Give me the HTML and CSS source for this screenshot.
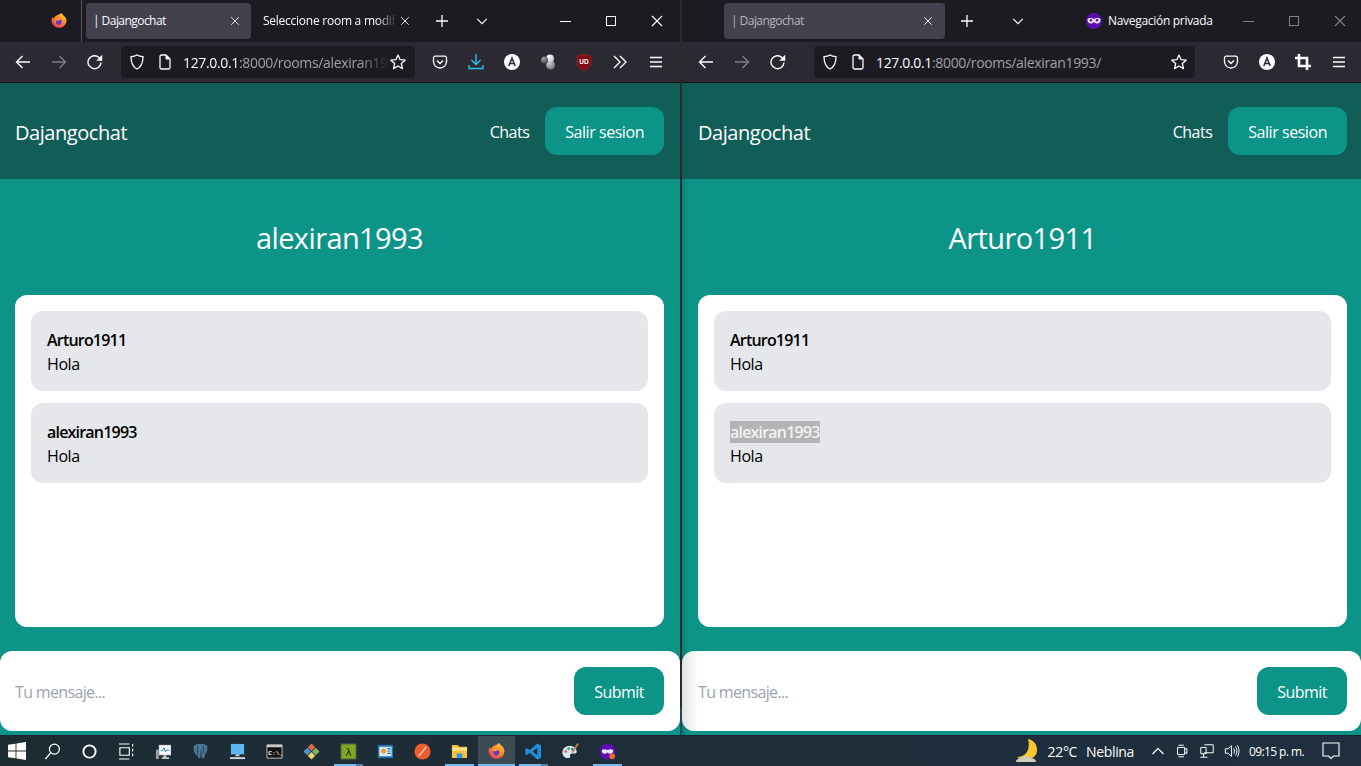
FILE: index.html
```html
<!DOCTYPE html>
<html lang="es">
<head>
<meta charset="utf-8">
<title>Dajangochat</title>
<link rel="stylesheet" href="styles.css">
</head>
<body>
<svg class="sprite" aria-hidden="true">
  <defs>
    <linearGradient id="ffg" x1="0.85" y1="0" x2="0.15" y2="1"><stop offset="0" stop-color="#ffd23a"/><stop offset="0.45" stop-color="#ff8a1e"/><stop offset="1" stop-color="#ee2a6a"/></linearGradient>
    <radialGradient id="ball-a" cx="0.35" cy="0.3" r="0.8"><stop offset="0" stop-color="#a8a8a8"/><stop offset="1" stop-color="#3d3d3d"/></radialGradient>
    <radialGradient id="ball-b" cx="0.35" cy="0.3" r="0.8"><stop offset="0" stop-color="#ffffff"/><stop offset="1" stop-color="#bdbdbd"/></radialGradient>
    <radialGradient id="ball-c" cx="0.4" cy="0.3" r="0.8"><stop offset="0" stop-color="#d0d0d0"/><stop offset="1" stop-color="#666"/></radialGradient>
    <symbol id="i-firefox" viewBox="0 0 16 16"><path d="M8.500 1.300C9.300.6 10.200.3 10.800 0c.1 1 .6 1.400 1.300 1.700.2 0 .4.300 0 .5 2.300 1.500 3.400 3.500 3.400 5.800A7.500 7.500 0 1 1 .6 6.300c.2-1 .7-1.800 1.200-2.300.1.800.4 1.200.9 1.500C3.400 3.500 5.800 2.200 8.500 1.300z" fill="url(#ffg)"/><circle cx="7.800" cy="8.600" r="3.700" fill="#ff9a24"/><circle cx="7.800" cy="9" r="2.900" fill="#6b35c9"/><path d="M4.700 7.400c1.200-1.500 4-1.700 5.500-.3-1.200-.4-2.200 0-2.800.7-.8-.5-1.800-.6-2.700-.4z" fill="#ffc13a"/></symbol>
    <symbol id="i-x" viewBox="0 0 16 16"><path d="M3 3l10 10M13 3L3 13" fill="none" stroke="currentColor" stroke-width="1.200"/></symbol>
    <symbol id="i-plus" viewBox="0 0 16 16"><path d="M8 2v12M2 8h12" fill="none" stroke="currentColor" stroke-width="1.300"/></symbol>
    <symbol id="i-chev" viewBox="0 0 16 16"><path d="M2.500 5.500L8 11l5.500-5.500" fill="none" stroke="currentColor" stroke-width="1.300"/></symbol>
    <symbol id="i-back" viewBox="0 0 16 16"><path d="M15 8H1.500M7.500 2L1.500 8l6 6" fill="none" stroke="currentColor" stroke-width="1.400"/></symbol>
    <symbol id="i-fwd" viewBox="0 0 16 16"><path d="M1 8h13.500M8.500 2l6 6-6 6" fill="none" stroke="currentColor" stroke-width="1.400"/></symbol>
    <symbol id="i-reload" viewBox="0 0 16 16"><path d="M14 8.500a6.500 6.500 0 1 1-2-5L14.500 6" fill="none" stroke="currentColor" stroke-width="1.400"/><path d="M15.200.8v6h-6z" fill="currentColor"/></symbol>
    <symbol id="i-shield" viewBox="0 0 16 16"><path d="M8 1c1.800 1.100 3.800 1.500 6 1.700 0 5.800-1.500 10-6 12.300C3.500 12.700 2 8.500 2 2.700 4.200 2.500 6.200 2.100 8 1z" fill="none" stroke="currentColor" stroke-width="1.300"/></symbol>
    <symbol id="i-page" viewBox="0 0 16 16"><path d="M3 2.500A1.500 1.500 0 0 1 4.500 1H9l4 4v8.500a1.500 1.500 0 0 1-1.500 1.500h-7A1.500 1.500 0 0 1 3 13.500z" fill="none" stroke="currentColor" stroke-width="1.300"/><path d="M9 1v4h4" fill="currentColor" stroke="currentColor" stroke-width="1"/></symbol>
    <symbol id="i-star" viewBox="0 0 16 16"><path d="M8 1l2.100 4.700 5.100.5-3.900 3.300 1.200 5.100L8 12l-4.500 2.600 1.200-5.100L.8 6.200l5.100-.5z" fill="none" stroke="currentColor" stroke-width="1.300" stroke-linejoin="round"/></symbol>
    <symbol id="i-pocket" viewBox="0 0 16 16"><path d="M1.500 4A1.800 1.800 0 0 1 3.300 2.200h9.400A1.800 1.800 0 0 1 14.500 4v3.500a6.500 6.500 0 0 1-13 0z" fill="none" stroke="currentColor" stroke-width="1.300"/><path d="M5 6.500L8 9.500l3-3" fill="none" stroke="currentColor" stroke-width="1.400"/></symbol>
    <symbol id="i-acct" viewBox="0 0 16 16"><circle cx="8" cy="8" r="8" fill="#fbfbfe"/><path d="M4.800 12L8 4l3.200 8M6 9.500h4" fill="none" stroke="#2b2a33" stroke-width="1.500"/></symbol>
    <symbol id="i-menu" viewBox="0 0 16 16"><path d="M2 3.500h12M2 8h12M2 12.500h12" fill="none" stroke="currentColor" stroke-width="1.400"/></symbol>
  </defs>
</svg>

<div class="windows">
  <section class="window win-left">
    <div class="tabbar">
      <svg class="ff-logo"><use href="#i-firefox"/></svg>
      <span class="tab-sep"></span>
      <div class="tab tab-a"><span class="tab-title tight">| Dajangochat</span><svg class="ico-s"><use href="#i-x"/></svg></div>
      <div class="tab tab-b"><span class="tab-title fade">Seleccione room a modificar</span><svg class="ico-s"><use href="#i-x"/></svg></div>
      <svg class="ico-m plus-l"><use href="#i-plus"/></svg>
      <svg class="ico-c chev-l"><use href="#i-chev"/></svg>
      <div class="wctl">
        <span class="wbtn"><span class="w-min"></span></span>
        <span class="wbtn"><span class="w-max"></span></span>
        <span class="wbtn"><svg class="ico-m"><use href="#i-x"/></svg></span>
      </div>
    </div>
    <div class="toolbar">
      <span class="tbtn"><svg class="ico-m"><use href="#i-back"/></svg></span>
      <span class="tbtn dim"><svg class="ico-m"><use href="#i-fwd"/></svg></span>
      <span class="tbtn"><svg class="ico-m"><use href="#i-reload"/></svg></span>
      <div class="urlbar ub-left">
        <svg class="ico-m ub-shield"><use href="#i-shield"/></svg>
        <svg class="ico-m ub-page"><use href="#i-page"/></svg>
        <span class="url fade"><b>127.0.0.1</b>:8000/rooms/alexiran1993/</span>
        <svg class="ico-m ub-star"><use href="#i-star"/></svg>
      </div>
      <span class="tbtn"><svg class="ico-m"><use href="#i-pocket"/></svg></span>
      <span class="tbtn dl"><svg class="ico-m" viewBox="0 0 16 16"><path d="M8 0v10M3.500 6L8 10.500 12.500 6M1 11v3.500h14V11" fill="none" stroke="currentColor" stroke-width="1.400"/></svg></span>
      <span class="tbtn"><svg class="ico-m"><use href="#i-acct"/></svg></span>
      <span class="tbtn"><svg class="ico-l" viewBox="0 0 18 18"><circle cx="11.500" cy="12" r="4.500" fill="url(#ball-c)"/><circle cx="11" cy="5.500" r="4" fill="url(#ball-b)"/><circle cx="5.500" cy="7" r="3.500" fill="url(#ball-a)"/></svg></span>
      <span class="tbtn"><svg class="ico-l" viewBox="0 0 18 18"><path d="M9 1l7 2v7c0 3.500-3.500 6-7 7.500C5.500 16 2 13.500 2 10V3z" fill="#7f0d12" stroke="#a33" stroke-width=".5"/><text x="9" y="11" class="ub-text">UD</text></svg></span>
      <span class="tbtn"><svg class="ico-m" viewBox="0 0 16 16"><path d="M2 2l6 6-6 6M8 2l6 6-6 6" fill="none" stroke="currentColor" stroke-width="1.400"/></svg></span>
      <span class="tbtn"><svg class="ico-m"><use href="#i-menu"/></svg></span>
    </div>
    <div class="page">
      <nav class="nav"><a class="brand">Dajangochat</a><div class="nav-links"><a class="nav-link">Chats</a><a class="btn">Salir sesion</a></div></nav>
      <h1 class="room-title">alexiran1993</h1>
      <div class="chat-card">
        <div class="msg"><p class="msg-name">Arturo1911</p><p>Hola</p></div>
        <div class="msg"><p class="msg-name">alexiran1993</p><p>Hola</p></div>
      </div>
      <form class="composer"><input class="composer-input" type="text" placeholder="Tu mensaje..."><button class="btn" type="button">Submit</button></form>
    </div>
  </section>

  <div class="divider"></div>

  <section class="window win-right">
    <div class="tabbar">
      <div class="tab tab-p"><span class="tab-title tight dimtext">| Dajangochat</span><svg class="ico-s"><use href="#i-x"/></svg></div>
      <svg class="ico-m plus-r"><use href="#i-plus"/></svg>
      <svg class="ico-c chev-r"><use href="#i-chev"/></svg>
      <svg class="ico-l mask" viewBox="0 0 18 18"><circle cx="9" cy="9" r="8" fill="#5b0fb0"/><path d="M2.500 7c2-1.500 4.500-1 6.500 0 2-1 4.500-1.500 6.500 0 .3 3-1.500 4.500-3.500 4.500S9.500 10 9 10s-1 1.500-3 1.500S2.200 10 2.500 7z" fill="#f1e6ff"/><circle cx="6" cy="8.300" r="1.300" fill="#5b0fb0"/><circle cx="12" cy="8.300" r="1.300" fill="#5b0fb0"/></svg>
      <span class="private">Navegación privada</span>
      <div class="wctl wctl-dim">
        <span class="wbtn"><span class="w-min"></span></span>
        <span class="wbtn"><span class="w-max"></span></span>
        <span class="wbtn"><svg class="ico-m"><use href="#i-x"/></svg></span>
      </div>
    </div>
    <div class="toolbar">
      <span class="tbtn"><svg class="ico-m"><use href="#i-back"/></svg></span>
      <span class="tbtn dim"><svg class="ico-m"><use href="#i-fwd"/></svg></span>
      <span class="tbtn"><svg class="ico-m"><use href="#i-reload"/></svg></span>
      <div class="urlbar ub-right">
        <svg class="ico-m ub-shield"><use href="#i-shield"/></svg>
        <svg class="ico-m ub-page"><use href="#i-page"/></svg>
        <span class="url"><b>127.0.0.1</b>:8000/rooms/alexiran1993/</span>
        <svg class="ico-m ub-star"><use href="#i-star"/></svg>
      </div>
      <span class="tbtn"><svg class="ico-m"><use href="#i-pocket"/></svg></span>
      <span class="tbtn"><svg class="ico-m"><use href="#i-acct"/></svg></span>
      <span class="tbtn"><svg class="ico-m" viewBox="0 0 16 16"><path d="M4 0v12h12M0 4h12v12" fill="none" stroke="currentColor" stroke-width="2.600"/></svg></span>
      <span class="tbtn"><svg class="ico-m"><use href="#i-menu"/></svg></span>
    </div>
    <div class="page">
      <nav class="nav"><a class="brand">Dajangochat</a><div class="nav-links"><a class="nav-link">Chats</a><a class="btn">Salir sesion</a></div></nav>
      <h1 class="room-title">Arturo1911</h1>
      <div class="chat-card">
        <div class="msg"><p class="msg-name">Arturo1911</p><p>Hola</p></div>
        <div class="msg"><p class="msg-name"><span class="selected">alexiran1993</span></p><p>Hola</p></div>
      </div>
      <form class="composer"><input class="composer-input" type="text" placeholder="Tu mensaje..."><button class="btn" type="button">Submit</button></form>
    </div>
  </section>
</div>

<footer class="taskbar">
  <div class="tk-apps">
    <span class="tk-win"><svg class="ico-l" viewBox="0 0 16 16"><path d="M0 2.400l6.700-.9v6.100H0zM7.500 1.400L16 0v7.600H7.500zM0 8.400h6.700v6.100L0 13.600zM7.500 8.400H16V16l-8.500-1.400z" fill="#fff"/></svg></span>
    <span class="tk"><svg viewBox="0 0 18 18"><circle cx="11" cy="6.500" r="5.300" fill="none" stroke="#fff" stroke-width="1.300"/><path d="M7 10.500L1.500 17" stroke="#fff" stroke-width="1.500"/></svg></span>
    <span class="tk"><svg viewBox="0 0 18 18"><circle cx="9" cy="9" r="6.500" fill="none" stroke="#fff" stroke-width="2"/></svg></span>
    <span class="tk"><svg viewBox="0 0 18 18"><path d="M1 1h11M1 17h11M2 5h10v8H2zM15.500 1v3M15.500 6v3M15.500 11v3" fill="none" stroke="#fff" stroke-width="1.200"/></svg></span>
    <span class="tk"><svg viewBox="0 0 18 18"><path d="M4 2h13v11H4z" fill="#d8dde0"/><path d="M5 3h11v9H5z" fill="#f4f6f7"/><path d="M6 8h2l1.500-3L11 9.500l1.300-2H15" fill="none" stroke="#2b7fc2" stroke-width="1"/><path d="M9 13h3v2h3v2H7v-2h2z" fill="#c3c8cb"/><path d="M1 7h3v10H1z" fill="#9aa0a3"/></svg></span>
    <span class="tk"><svg viewBox="0 0 18 18"><path d="M2 3c3-3 11-3 14 0 1 4 0 7-2 8l-1 5c-2 1-3 0-3-2V7c-1 0-1 7-1 8-2 2-3 1-3-2-3 1-5-6-4-10z" fill="#4a7793"/><path d="M6 3v9M12 3v8" stroke="#22333f" stroke-width=".8"/></svg></span>
    <span class="tk"><svg viewBox="0 0 18 18"><path d="M2 1h14v11H2z" fill="#5db7ef"/><path d="M7 12h4v2H7z" fill="#cfd8dd"/><path d="M1 15h16v2H1z" fill="#cfd8dd"/></svg></span>
    <span class="tk"><svg viewBox="0 0 18 18"><path d="M1 2h16v14H1z" fill="#111" stroke="#c8c8c8" stroke-width="1"/><path d="M1 2h16v2.500H1z" fill="#c8c8c8"/><text x="2.500" y="12.500" class="cmd-text">C:\_</text></svg></span>
    <span class="tk"><svg viewBox="0 0 18 18"><path d="M9 .5L13 4.500 9 8.500 5 4.500z" fill="#d9694f"/><path d="M13.500 5L17.500 9 13.500 13 9.500 9z" fill="#7eb35a"/><path d="M9 9.500L13 13.500 9 17.500 5 13.500z" fill="#efd36a"/><path d="M4.500 5L8.500 9 4.500 13 .5 9z" fill="#5a8fd0"/></svg></span>
    <span class="tk bar-double"><svg viewBox="0 0 18 18"><path d="M1 1h16v16H1z" fill="#7fa61e" stroke="#555" stroke-width="1"/><text x="9" y="13.500" class="lam-text">λ</text></svg></span>
    <span class="tk"><svg viewBox="0 0 18 18"><path d="M1 2h16v14H1z" fill="#1e73b8"/><path d="M2.500 4h13v10h-13z" fill="#d6eaf7"/><circle cx="7" cy="8.500" r="2.700" fill="#f09a2c"/><path d="M11 6h3.500M11 8.500h3.500M11 11h3.500" stroke="#1e73b8" stroke-width="1.200"/></svg></span>
    <span class="tk"><svg viewBox="0 0 18 18"><circle cx="9" cy="9" r="8.500" fill="#ee5d2f"/><path d="M5 14L13 4" stroke="#f6d9c9" stroke-width="1.300"/></svg></span>
    <span class="tk bar-single"><svg viewBox="0 0 18 18"><path d="M1 2h6l2 2h8v12H1z" fill="#f5c23e"/><path d="M1 5h16v3H1z" fill="#fde08a"/><path d="M6 11h6v5H6z" fill="#3a95dc"/></svg></span>
    <span class="tk tk-active bar-active"><svg><use href="#i-firefox"/></svg></span>
    <span class="tk bar-double"><svg viewBox="0 0 18 18"><path d="M13 .5L17 2.500v13L13 17.500 5 10.200 1.800 12.700.5 12V6l1.300-.7L5 7.800z" fill="#1f8fdc"/><path d="M13 5L8 9l5 4z" fill="#1b2b36"/></svg></span>
    <span class="tk"><svg viewBox="0 0 18 18"><path d="M8 3C3 3 0 7 .5 11c.5 3 3 5 6.500 5 2 0 2-1.500 1.500-2.500S9 11 11 11h3c2 0 2-3 .5-5C13 4 11 3 8 3z" fill="#d7e6ef"/><circle cx="4" cy="9" r="1.400" fill="#e8554b"/><circle cx="7" cy="6" r="1.400" fill="#38a16b"/><circle cx="11" cy="6.500" r="1.400" fill="#3a78d6"/><path d="M17 .5L11 10" stroke="#c48a3a" stroke-width="1.800"/></svg></span>
    <span class="tk bar-single"><svg viewBox="0 0 18 18"><circle cx="9" cy="9" r="8.500" fill="#5b0fb0"/><path d="M3 7.500c2-1.500 4-1 6 0 2-1 4-1.500 6 0 .3 3-1.500 4-3 4s-2.500-1.500-3-1.500-1.500 1.500-3 1.500-3.300-1-3-4z" fill="#f1e6ff"/><circle cx="14" cy="14" r="3" fill="#ee6a2f"/></svg></span>
  </div>
  <div class="tk-tray">
    <svg class="moon" viewBox="0 0 24 24"><path d="M13 0c6 1 9 6 9 11 0 5-3 8-8 9-5 1-9 0-12-2 6 0 9-3 11-7 1-4 1-8 0-11z" fill="#f8c62d"/><path d="M1 23c0-2 2-4 5-4 1-3 7-3 9 0 3 0 6 1 6 4z" fill="#d3ccb8"/></svg>
    <span class="tray-temp">22°C</span>
    <span class="tray-cond">Neblina</span>
    <svg class="tray-chev" viewBox="0 0 14 14"><path d="M1.500 10L7 4.500 12.500 10" fill="none" stroke="#fff" stroke-width="1.200"/></svg>
    <svg class="tray-i" viewBox="0 0 18 18"><path d="M4 5h8v8H4zM12 7.500l2.500-1.500v6L12 10.500M5 2.500h6M5 15.500h6" fill="none" stroke="#fff" stroke-width="1.100"/></svg>
    <svg class="tray-i" viewBox="0 0 18 18"><path d="M6 2h10v9H6M2 5h6v7H2zM5 12v4M1.500 16h8" fill="none" stroke="#fff" stroke-width="1.100"/></svg>
    <svg class="tray-i" viewBox="0 0 18 18"><path d="M1.500 6.500h3L8.500 3v12l-4-3.500h-3zM11 6c1 2 1 4 0 6M13 4c2 3 2 7 0 10M15 2.500c2.500 4 2.500 9 0 13" fill="none" stroke="#fff" stroke-width="1.100"/></svg>
    <span class="tray-time">09:15 p. m.</span>
    <svg class="tray-note" viewBox="0 0 18 18"><path d="M1 1h16v13h-5.500L9 16.500 6.500 14H1z" fill="none" stroke="#fff" stroke-width="1.100"/></svg>
  </div>
</footer>
</body>
</html>
```

FILE: styles.css
```css
* { box-sizing: border-box; }
html, body { height: 100%; }
body {
  margin: 0;
  width: 1361px;
  height: 766px;
  overflow: hidden;
  display: flex;
  flex-direction: column;
  font-family: "Open Sans", "Noto Sans", sans-serif;
  background: #1c2b36;
}
p { margin: 0; }
.sprite { width: 0; height: 0; position: absolute; }
svg { display: block; flex: none; overflow: visible; }
.ico-s { width: 12px; height: 12px; }
.ico-c { width: 14px; height: 14px; }
.ico-m { width: 16px; height: 16px; }
.ico-l { width: 18px; height: 18px; }

.windows { display: flex; height: 735px; }
.window { display: flex; flex-direction: column; min-width: 0; }
.win-left { width: 680px; --pad-l: 15px; --pad-r: 16px; }
.win-right { width: 679px; --pad-l: 16px; --pad-r: 14px; }
.divider { width: 2px; background: linear-gradient(to bottom, #2a2a2a 708px, #1d4a60 708px); }

/* browser chrome */
.tabbar {
  height: 42px;
  flex: none;
  display: flex;
  align-items: center;
  background: #1c1b22;
  color: #fbfbfe;
}
.ff-logo { width: 16px; height: 16px; margin-left: 51px; }
.tab-sep { width: 1px; height: 42px; background: #55545c; margin-left: 14px; }
.tab {
  height: 36px;
  display: flex;
  align-items: center;
  font-size: 12px;
  letter-spacing: -0.25px;
}
.tab-a { width: 165px; margin-left: 4px; padding: 0 10px 0 7px; background: #42414d; border-radius: 4px; justify-content: space-between; }
.tab-b { width: 160px; padding: 0 0 0 12px; gap: 2px; color: #fbfbfe; }
.tab-p { width: 221px; margin-left: 42px; padding: 0 11px 0 7px; background: #42414d; border-radius: 4px; justify-content: space-between; }
.tab-title { white-space: nowrap; overflow: hidden; flex: 1; padding-bottom: 2px; }
.tight { letter-spacing: -0.55px; }
.dimtext { color: #b5b5bb; }
.fade {
  -webkit-mask-image: linear-gradient(to right, #000 85%, transparent 100%);
  mask-image: linear-gradient(to right, #000 85%, transparent 100%);
}
.plus-l { margin-left: 23px; }
.chev-l { margin-left: 25px; }
.plus-r { margin-left: 14px; }
.chev-r { margin-left: 36px; }
.mask { margin-left: 60px; }
.private { font-size: 12px; letter-spacing: -0.3px; margin-left: 5px; padding-bottom: 2px; white-space: nowrap; }
.wctl { display: flex; margin-left: auto; }
.wctl-dim { opacity: .45; margin-right: -2px; }
.wbtn { width: 46px; height: 42px; display: flex; align-items: center; justify-content: center; }
.w-min { width: 11px; height: 1px; background: #fbfbfe; }
.w-max { width: 10px; height: 10px; border: 1px solid #fbfbfe; }

.toolbar {
  height: 41px;
  flex: none;
  display: flex;
  align-items: center;
  padding-left: 5px;
  background: #2b2a33;
  border-bottom: 1px solid #111;
  color: #fbfbfe;
}
.win-right .toolbar { padding-left: 6px; }
.tbtn { width: 36px; height: 32px; display: flex; align-items: center; justify-content: center; }
.dim { opacity: .4; }
.dl { color: #2bc3ee; }
.ub-text { font-family: "Liberation Sans", sans-serif; font-size: 6.500px; font-weight: 700; fill: #fff; text-anchor: middle; }
.cmd-text { font-family: "Liberation Mono", monospace; font-size: 6.500px; font-weight: 700; fill: #fff; }
.lam-text { font-family: "DejaVu Sans", sans-serif; font-size: 11px; fill: #1d2a10; text-anchor: middle; }

.urlbar {
  height: 32px;
  display: flex;
  align-items: center;
  background: #1c1b22;
  border-radius: 4px;
  padding: 0 9px 0 8px;
}
.ub-left { width: 294px; margin: 0 7px 0 8px; }
.ub-right { width: 381px; margin: 0 18px; padding-right: 8px; }
.ub-page { margin-left: 12px; }
.url {
  flex: 1;
  min-width: 0;
  overflow: hidden;
  white-space: nowrap;
  margin-left: 10px;
  font-size: 14px;
  letter-spacing: -0.34px;
  color: #a0a0a5;
}
.url b { font-weight: 400; color: #fbfbfe; }

/* chat page */
.page {
  flex: 1;
  min-height: 0;
  display: flex;
  flex-direction: column;
  background: #0d9488;
  color: #fff;
}
.win-right .page { box-shadow: inset 7px 0 6px -5px rgba(0, 0, 0, .18); }
.nav {
  height: 96px;
  flex: none;
  display: flex;
  align-items: center;
  justify-content: space-between;
  padding: 0 var(--pad-r) 0 var(--pad-l);
  background: #115e59;
}
.brand { font-size: 20px; letter-spacing: -0.45px; padding-top: 2px; }
.nav-links { display: flex; align-items: center; gap: 16px; }
.nav-link { font-size: 16px; letter-spacing: -0.5px; padding-top: 2px; }
.btn {
  display: block;
  height: 48px;
  padding: 0 20px;
  border: 0;
  border-radius: 12px;
  background: #0d9488;
  color: #fff;
  font: inherit;
  font-size: 16px;
  line-height: 50px;
  letter-spacing: -0.45px;
}
.composer .btn { padding: 1px 20px 0; line-height: 48px; letter-spacing: -0.55px; }
.room-title {
  height: 116px;
  flex: none;
  margin: 0;
  padding: 41px var(--pad-r) 39px var(--pad-l);
  font-size: 29px;
  font-weight: 400;
  line-height: 36px;
  letter-spacing: -0.6px;
  text-align: center;
}
.chat-card {
  height: 332px;
  flex: none;
  margin: 0 var(--pad-r) 0 var(--pad-l);
  padding: 16px;
  display: flex;
  flex-direction: column;
  gap: 12px;
  background: #fff;
  border-radius: 12px;
  color: #000;
}
.msg {
  padding: 17px 16px 15px;
  background: #e5e7eb;
  border-radius: 12px;
  font-size: 16px;
  line-height: 24px;
  letter-spacing: -0.4px;
}
.msg-name { font-weight: 600; letter-spacing: -0.8px; }
.selected { display: inline-block; height: 22px; line-height: 22px; background: #b4b4b4; color: #f2f2f2; }
.composer {
  height: 80px;
  flex: none;
  margin-top: 24px;
  padding: 16px var(--pad-r) 16px var(--pad-l);
  display: flex;
  align-items: center;
  gap: 12px;
  background: #fff;
  border-radius: 12px;
}
.win-right .composer { background: linear-gradient(to right, #e2e2e2 0, #fff 16px); }
.composer-input {
  flex: 1;
  min-width: 0;
  border: 0;
  outline: 0;
  padding: 2px 0 0;
  background: transparent;
  font: inherit;
  font-size: 16px;
  letter-spacing: -0.65px;
}
.composer-input::placeholder { color: #9ca3af; opacity: 1; }

/* taskbar */
.taskbar {
  height: 31px;
  flex: none;
  display: flex;
  align-items: stretch;
  justify-content: space-between;
  background: linear-gradient(to right, #1d2b33, #1f2f3f);
  border-top: 1px solid #17242e;
  color: #fff;
}
.tk-apps { display: flex; }
.tk-win { width: 33.500px; display: flex; align-items: center; justify-content: center; }
.tk { width: 37px; display: flex; align-items: center; justify-content: center; position: relative; }
.tk svg { width: 17px; height: 17px; }
.tk-active { background: #3d4b55; }
.bar-single::after, .bar-double::after, .bar-active::after {
  content: "";
  position: absolute;
  left: 4px;
  right: 4px;
  bottom: 0;
  height: 2px;
  background: #76b9ed;
}
.bar-active::after { left: 0; right: 0; }
.bar-double::after { background: linear-gradient(to right, #76b9ed 75%, #4f83ad 75%); }

.tk-tray { display: flex; align-items: center; padding-right: 21px; font-size: 14px; letter-spacing: -0.35px; }
.moon { width: 24px; height: 24px; }
.tray-temp { margin-left: 9px; }
.tray-cond { margin-left: 9px; }
.tray-chev { width: 14px; height: 14px; margin-left: 17px; }
.tray-i { width: 16px; height: 16px; margin-left: 9px; }
.tray-time { font-size: 12px; letter-spacing: -0.6px; margin-left: 9px; }
.tray-note { width: 18px; height: 18px; margin-left: 18px; }
```
